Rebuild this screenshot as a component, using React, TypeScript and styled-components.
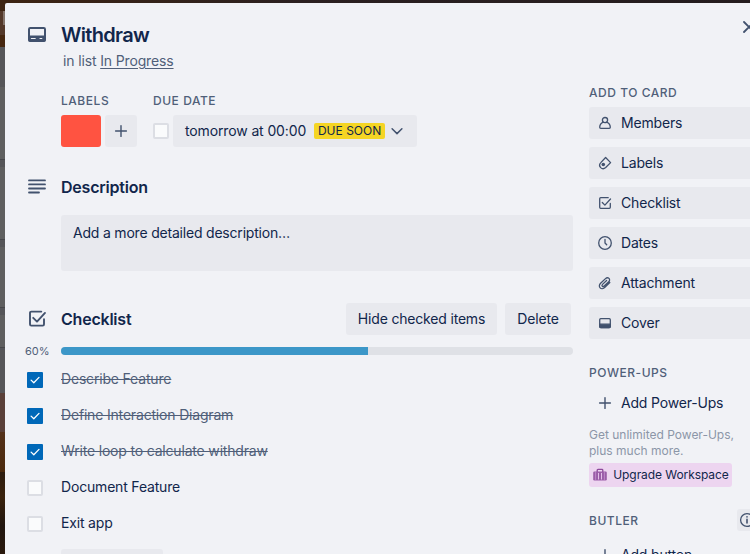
import React from "react";
import styled, { createGlobalStyle } from "styled-components";

const GlobalStyle = createGlobalStyle`
  * { box-sizing: border-box; }
  html, body { margin: 0; padding: 0; overflow: hidden; }
  body { font-family: Inter, "Liberation Sans", sans-serif; font-size: 14px; line-height: 20px; letter-spacing: -0.18px; color: #11264b; }
  button { font: inherit; color: inherit; letter-spacing: inherit; border: 0; margin: 0; }
`;

const Page = styled.div`
  display: flex;
  align-items: flex-start;
  width: 750px;
  height: 554px;
  overflow: hidden;
  background: linear-gradient(90deg, #3d2412, #2b2020 40%, #241c1e);
`;

const BoardEdge = styled.div`
  flex: none;
  width: 5px;
  height: 554px;
  overflow: hidden;
`;

const Strip = styled.div<{ $h: number; $bg: string }>`
  height: ${(p) => p.$h}px;
  background: ${(p) => p.$bg};
`;

const Dialog = styled.main`
  position: relative;
  flex: none;
  width: 768px;
  height: 600px;
  margin-top: 3px;
  border-radius: 2px;
  background: #f1f2f6;
`;

const Header = styled.header`
  display: flex;
  height: 88px;
  padding: 20px 0 0 22px;
`;

const HeaderText = styled.div`
  padding-left: 14px;
`;

const Title = styled.h1`
  margin: 0;
  font-size: 20px;
  font-weight: 600;
  line-height: 24px;
  letter-spacing: -0.68px;
`;

const ListLine = styled.p`
  margin: 4px 0 0 2px;
  color: #505f79;
  letter-spacing: -0.14px;
`;

const ListLink = styled.a`
  text-decoration: underline;
  text-underline-offset: 2px;
`;

const Columns = styled.div`
  display: flex;
`;

const Main = styled.section`
  width: 568px;
  padding-left: 20px;
`;

const Details = styled.div`
  display: flex;
  gap: 16px;
  margin-left: 36px;
`;

const Caption = styled.h3`
  margin: 0;
  font-size: 12px;
  font-weight: 500;
  line-height: 20px;
  letter-spacing: 0.54px;
  color: #505f79;
  white-space: nowrap;
`;

const DetailRow = styled.div`
  display: flex;
  align-items: center;
  gap: 4px;
  height: 32px;
  margin-top: 4px;
`;

const LabelChip = styled.span`
  width: 40px;
  height: 32px;
  border-radius: 3px;
  background: #ff5341;
`;

const Button = styled.button<{ $w?: number }>`
  display: flex;
  align-items: center;
  justify-content: center;
  flex: none;
  height: 32px;
  width: ${(p) => (p.$w ? p.$w + "px" : "auto")};
  padding: 0;
  border-radius: 3px;
  background: #e8e9ee;
  white-space: nowrap;
`;

const DateButton = styled(Button)`
  justify-content: flex-start;
  padding: 0 0 0 12px;
  letter-spacing: -0.13px;
`;

const SoonBadge = styled.span`
  width: 71px;
  height: 16px;
  margin: 0 4px 0 8px;
  border-radius: 2px;
  background: #f5d524;
  font-size: 12px;
  line-height: 16px;
  text-align: center;
  letter-spacing: 0;
`;

const Box = styled.span<{ $checked?: boolean }>`
  display: flex;
  flex: none;
  width: 16px;
  height: 16px;
  border: ${(p) => (p.$checked ? "0" : "2px solid #dcdee4")};
  border-radius: ${(p) => (p.$checked ? 1 : 2)}px;
  background: ${(p) => (p.$checked ? "#0068b8" : "#fafbfc")};
`;

const SectionHead = styled.div`
  display: flex;
  align-items: center;
  height: 32px;
  width: 546px;
`;

const SectionIcon = styled.span`
  display: flex;
  width: 36px;
  padding-left: 2px;
`;

const SectionTitle = styled.h2`
  flex: 1;
  margin: 0 0 1px;
  font-size: 16px;
  font-weight: 600;
  line-height: 20px;
  letter-spacing: -0.22px;
`;

const HeadButtons = styled.div`
  display: flex;
  gap: 8px;
`;

const Description = styled.section`
  margin-top: 24px;
`;

const DescriptionBox = styled.div`
  width: 512px;
  height: 56px;
  margin: 12px 0 0 36px;
  padding: 8px 12px;
  border-radius: 3px;
  background: #e8e9ee;
  letter-spacing: -0.2px;
`;

const Checklist = styled.section`
  margin-top: 32px;
`;

const ProgressRow = styled.div`
  display: flex;
  align-items: center;
  height: 8px;
  margin-top: 12px;
`;

const Percent = styled.span`
  width: 36px;
  font-size: 11px;
  line-height: 8px;
  letter-spacing: 0;
  color: #505f79;
`;

const Track = styled.div`
  width: 512px;
  height: 8px;
  border-radius: 4px;
  overflow: hidden;
  background: #dfe1e6;
`;

const Fill = styled.div`
  height: 8px;
  background: #3c97c8;
`;

const Items = styled.ul`
  margin: 14px 0 0;
  padding: 0;
  list-style: none;
`;

const Item = styled.li<{ $done: boolean }>`
  display: flex;
  gap: 18px;
  height: 36px;
  padding-left: 2px;
  color: ${(p) => (p.$done ? "#505f79" : "#11264b")};
  text-decoration: ${(p) => (p.$done ? "line-through" : "none")};
  ${Box} { margin-top: 3px; }
`;

const AddItem = styled(Button)`
  margin-left: 36px;
`;

const Sidebar = styled.aside`
  width: 168px;
  margin-left: 16px;
  margin-top: -8px;
`;

const Stack = styled.div`
  display: flex;
  flex-direction: column;
  gap: 8px;
  margin: 4px 0 24px;
`;

const SideButton = styled(Button)<{ $plain?: boolean }>`
  justify-content: flex-start;
  gap: 8px;
  width: 168px;
  padding-left: 8px;
  background: ${(p) => (p.$plain ? "transparent" : "#e8e9ee")};
`;

const Note = styled.p`
  margin: 0 0 4px;
  color: #8c96a8;
  font-size: 12px;
  line-height: 16px;
  letter-spacing: 0;
`;

const Upgrade = styled(Button)`
  gap: 5px;
  width: 143px;
  height: 24px;
  background: #edd5f0;
  font-size: 12px;
  letter-spacing: -0.07px;
`;

const ButlerHead = styled.div`
  display: flex;
  align-items: center;
  justify-content: space-between;
  height: 22px;
  margin: -2px 0 8px;
  ${Caption} { padding-top: 2px; }
`;

const InfoButton = styled(Button)`
  width: 20px;
  height: 22px;
`;

const Close = styled.button`
  position: absolute;
  top: 16px;
  right: 16px;
  width: 16px;
  height: 16px;
  padding: 0;
  background: transparent;
`;

const Svg = styled.svg`
  display: block;
  flex: none;
  fill: none;
  stroke: #42526e;
  stroke-width: 1.3;
  stroke-linecap: round;
  stroke-linejoin: round;
`;

type IconName =
  | "members" | "labels" | "checklist" | "dates" | "attachment" | "cover"
  | "plus" | "chevron" | "tick" | "info" | "close" | "case";

const shapes: Record<IconName, React.ReactNode> = {
  members: (
    <>
      <circle cx="8" cy="5.1" r="2.6" />
      <path d="M6.2 7.2C4.2 8 2.8 9.9 2.7 12.3c0 .7.4 1.1 1.1 1.1h8.4c.7 0 1.1-.4 1.1-1.1-.1-2.4-1.5-4.3-3.5-5.1" />
    </>
  ),
  labels: (
    <>
      <path d="m8.6 2.5 5 5.1-4.9 4.9c-1.5 1.4-3.7 1.4-5 .1-1.3-1.4-1.3-3.6.1-5Z" />
      <circle cx="6.3" cy="9.5" r="1.8" fill="#42526e" stroke="none" />
    </>
  ),
  checklist: (
    <>
      <path d="M11.2 2.7H3.7c-.6 0-1 .4-1 1v8.6c0 .6.4 1 1 1h8.6c.6 0 1-.4 1-1V8.5" />
      <path d="m5.3 7.5 2.6 2.6L13.5 4" />
    </>
  ),
  dates: (
    <>
      <circle cx="8" cy="8" r="6.3" />
      <path d="M8 4.3V8l1.7 1.8" />
    </>
  ),
  attachment: (
    <path d="m12.8 7.5-4.9 4.8c-1.5 1.5-3.7 1.7-4.8.6-1.2-1.2-.9-3.2.5-4.6l4.9-4.7c1-1 2.6-1.1 3.5-.2s.7 2.5-.3 3.4L7.2 11c-.6.6-1.4.7-1.9.2s-.4-1.2.2-1.8L9.6 5.5" />
  ),
  cover: (
    <>
      <rect x="2.7" y="3.7" width="10.6" height="8.8" rx="1" />
      <path d="M2.7 9.2h10.6v2.3q0 1-1 1H3.7q-1 0-1-1Z" fill="#42526e" />
    </>
  ),
  plus: <path d="M8 2.6v10.8M2.6 8h10.8" strokeWidth="1.4" />,
  chevron: <path d="m3.1 5.8 4.9 4.8 4.9-4.8" strokeWidth="1.5" />,
  tick: <path d="m4.1 8.1 2.7 2.6L12 5.4" stroke="#fff" strokeWidth="1.3" />,
  info: (
    <>
      <circle cx="8" cy="8" r="6.4" />
      <path d="M8 7.4v3.6M8 4.7v.3" strokeWidth="1.6" />
    </>
  ),
  close: <path d="m3 3 10 10M13 3 3 13" strokeWidth="1.8" />,
  case: (
    <>
      <rect x="1.2" y="4.5" width="13.6" height="9" rx="1.2" fill="#9b5da8" stroke="none" />
      <path d="M5.2 4.4V3.2c0-.5.3-.8.8-.8h4c.5 0 .8.3.8.8v1.2" stroke="#8d4a9b" />
      <path d="M3.6 5.5v7M12.4 5.5v7" stroke="#c793d0" strokeWidth=".8" />
      <path d="M6.5 6.3v5.8M9.5 6.3v5.8" stroke="#e3bfe8" strokeWidth="1" />
    </>
  ),
};

const Icon = ({ name, size = 16 }: { name: IconName; size?: number }) => (
  <Svg width={size} height={size} viewBox="0 0 16 16">{shapes[name]}</Svg>
);

const CardIcon = () => (
  <Svg width="20" height="24" viewBox="0 0 20 24">
    <rect x="2" y="5" width="16" height="13" rx="1.2" strokeWidth="2" />
    <path d="M2 13.2h16v4.1q0 .7-.8.7H2.8q-.8 0-.8-.7Z" fill="#42526e" strokeWidth="1.4" />
    <path d="M4.4 15.5h3.8M13 15.5h1.8" stroke="#f1f2f6" strokeWidth="1.2" />
  </Svg>
);

const TextIcon = () => (
  <Svg width="20" height="20" viewBox="0 0 20 20">
    <path d="M2 3.4h16M2 7.4h16M2 11.5h16M2 15.5h10" strokeWidth="1.8" />
  </Svg>
);

const TaskIcon = () => (
  <Svg width="20" height="20" viewBox="0 0 20 20">
    <path d="M14.3 2.6H4.3C3.6 2.6 3 3.2 3 3.9v11.4c0 .7.6 1.3 1.3 1.3h11.4c.7 0 1.3-.6 1.3-1.3v-5" strokeWidth="1.9" />
    <path d="m6.2 8.8 3.8 3.8 8-8.7" strokeWidth="1.9" />
  </Svg>
);

const strips: [number, string][] = [
  [11, "#3d2412"],
  [14, "linear-gradient(90deg, #54392a 55%, #85756b 60%)"],
  [10, "#54392a"],
  [12, "#462710"],
  [40, "#565659"],
  [72, "#5f5f5f"],
  [1, "#47474a"],
  [7, "#565659"],
  [72, "#5f5f5f"],
  [1, "#47474a"],
  [7, "#565659"],
  [60, "#5f5f5f"],
  [1, "#47474a"],
  [7, "#565659"],
  [32, "#5f5f5f"],
  [1, "#47474a"],
  [45, "#565659"],
  [39, "#5a4039"],
  [40, "linear-gradient(#55321a, #4c2a0d)"],
  [83, "linear-gradient(#2d1d10, #3b230d 30%, #21160f 65%, #2a190d)"],
];

const actions: [IconName, string][] = [
  ["members", "Members"],
  ["labels", "Labels"],
  ["checklist", "Checklist"],
  ["dates", "Dates"],
  ["attachment", "Attachment"],
  ["cover", "Cover"],
];

const tasks = [
  { text: "Describe Feature", done: true },
  { text: "Define Interaction Diagram", done: true },
  { text: "Write loop to calculate withdraw", done: true },
  { text: "Document Feature", done: false },
  { text: "Exit app", done: false },
];

const percent = Math.round((tasks.filter((t) => t.done).length / tasks.length) * 100);

export default function App() {
  return (
    <>
      <GlobalStyle />
      <Page>
        <BoardEdge>
          {strips.map(([h, bg], i) => <Strip key={i} $h={h} $bg={bg} />)}
        </BoardEdge>
        <Dialog>
          <Close><Icon name="close" /></Close>
          <Header>
            <CardIcon />
            <HeaderText>
              <Title>Withdraw</Title>
              <ListLine>in list <ListLink>In Progress</ListLink></ListLine>
            </HeaderText>
          </Header>
          <Columns>
            <Main>
              <Details>
                <div>
                  <Caption>LABELS</Caption>
                  <DetailRow>
                    <LabelChip />
                    <Button $w={32}><Icon name="plus" /></Button>
                  </DetailRow>
                </div>
                <div>
                  <Caption>DUE DATE</Caption>
                  <DetailRow>
                    <Box />
                    <DateButton $w={244}>
                      tomorrow at 00:00
                      <SoonBadge>DUE SOON</SoonBadge>
                      <Icon name="chevron" />
                    </DateButton>
                  </DetailRow>
                </div>
              </Details>
              <Description>
                <SectionHead>
                  <SectionIcon><TextIcon /></SectionIcon>
                  <SectionTitle>Description</SectionTitle>
                </SectionHead>
                <DescriptionBox>Add a more detailed description…</DescriptionBox>
              </Description>
              <Checklist>
                <SectionHead>
                  <SectionIcon><TaskIcon /></SectionIcon>
                  <SectionTitle>Checklist</SectionTitle>
                  <HeadButtons>
                    <Button $w={151}>Hide checked items</Button>
                    <Button $w={66}>Delete</Button>
                  </HeadButtons>
                </SectionHead>
                <ProgressRow>
                  <Percent>{percent}%</Percent>
                  <Track><Fill style={{ width: `${percent}%` }} /></Track>
                </ProgressRow>
                <Items>
                  {tasks.map((t) => (
                    <Item key={t.text} $done={t.done}>
                      <Box $checked={t.done}>{t.done && <Icon name="tick" />}</Box>
                      <span>{t.text}</span>
                    </Item>
                  ))}
                </Items>
                <AddItem $w={102} />
              </Checklist>
            </Main>
            <Sidebar>
              <Caption>ADD TO CARD</Caption>
              <Stack>
                {actions.map(([icon, text]) => (
                  <SideButton key={text}><Icon name={icon} />{text}</SideButton>
                ))}
              </Stack>
              <Caption>POWER-UPS</Caption>
              <Stack>
                <SideButton $plain><Icon name="plus" />Add Power-Ups</SideButton>
                <div>
                  <Note>Get unlimited Power-Ups, plus much more.</Note>
                  <Upgrade><Icon name="case" />Upgrade Workspace</Upgrade>
                </div>
              </Stack>
              <ButlerHead>
                <Caption>BUTLER</Caption>
                <InfoButton><Icon name="info" /></InfoButton>
              </ButlerHead>
              <SideButton $plain><Icon name="plus" />Add button</SideButton>
            </Sidebar>
          </Columns>
        </Dialog>
      </Page>
    </>
  );
}
